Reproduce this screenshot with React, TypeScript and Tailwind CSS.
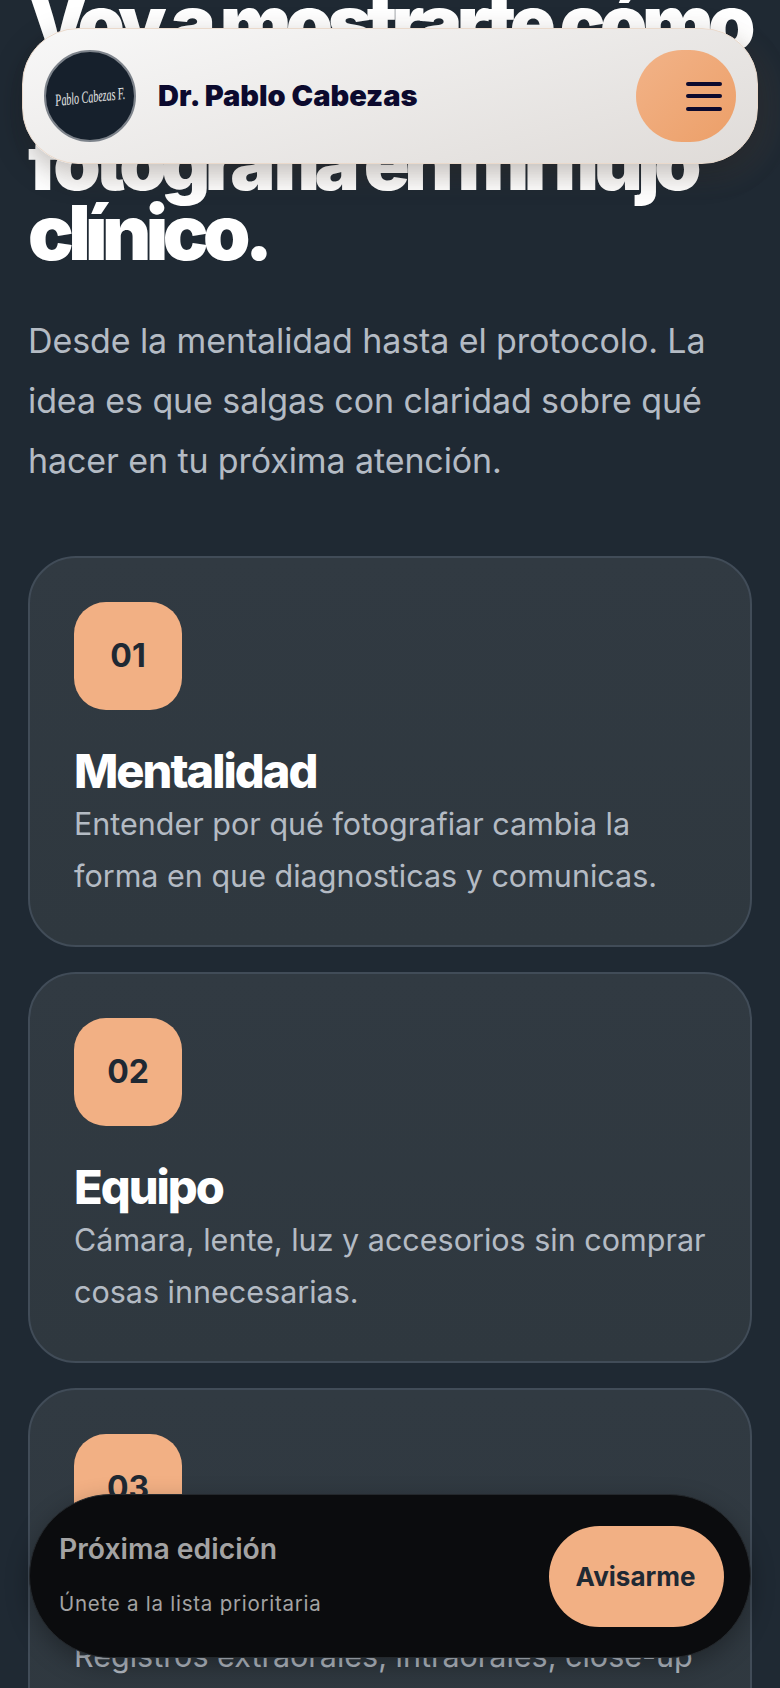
const sans = "font-['Inter','Liberation_Sans',sans-serif]"

const cards = [
  {
    n: "01",
    title: "Mentalidad",
    text: "Entender por qué fotografiar cambia la forma en que diagnosticas y comunicas.",
  },
  {
    n: "02",
    title: "Equipo",
    text: "Cámara, lente, luz y accesorios sin comprar cosas innecesarias.",
  },
  {
    n: "03",
    title: "Protocolo",
    text: "Registros extraorales, intraorales, close-up y videos para tus casos clínicos.",
  },
]

const StepCard = ({ n, title, text }: { n: string; title: string; text: string }) => {
  return (
    <div className="rounded-[48px] border-2 border-[#414c58] bg-[linear-gradient(180deg,#313a42,#2f383f)] px-[44px] pt-[44px] pb-[43px]">
      <div className="flex h-[108px] w-[108px] items-center justify-center rounded-[32px] bg-[#f2b084] text-[32px] font-bold text-[#1f2933]">
        {n}
      </div>
      <h3 className="mt-[34px] text-[47px] leading-[54px] font-extrabold tracking-[-2px] text-white">
        {title}
      </h3>
      <p className="text-[30.5px] leading-[52px] text-[#b4bbc4]">{text}</p>
    </div>
  )
}

export default function App() {
  return (
    <div className={`relative h-[1688px] w-[780px] overflow-hidden bg-[#1f2933] ${sans}`}>
      <main className="-mt-[13px] px-[28px]">
        <h1 className="text-[76px] leading-[70px] font-black tracking-[-5.6px] text-white">
          Voy a mostrarte cómo
          <br />
          integro la
          <br />
          fotografía en mi flujo
          <br />
          clínico.
        </h1>
        <p className="mt-[44px] text-[34px] leading-[60px] tracking-[-0.1px] text-[#b4bbc4]">
          Desde la mentalidad hasta el protocolo. La idea es que salgas con claridad sobre qué
          hacer en tu próxima atención.
        </p>
        <div className="mt-[65px] flex flex-col gap-[25px]">
          {cards.map((c) => (
            <StepCard key={c.n} {...c} />
          ))}
        </div>
      </main>

      <header className="absolute top-[28px] left-[22px] flex h-[136px] w-[736px] items-center justify-between rounded-[56px] border border-[#ead9cb] bg-[linear-gradient(165deg,#f8f8f8,#dfdbd8)] px-[21px] shadow-[0_10px_30px_rgba(0,0,0,0.25),12px_12px_30px_rgba(242,176,132,0.08)]">
        <div className="flex items-center gap-[22px]">
          <div className="flex h-[92px] w-[92px] items-center justify-center overflow-hidden rounded-full border-2 border-[#7d838b] bg-[#16202c]">
            <span className="-rotate-6 scale-y-[1.7] font-['Liberation_Serif',serif] text-[10px] font-light whitespace-nowrap text-white/90 italic">
              Pablo Cabezas F.
            </span>
          </div>
          <span className="text-[29px] font-black tracking-[0px] text-[#0c0a2e]">
            Dr. Pablo Cabezas
          </span>
        </div>
        <button className="flex h-[92px] w-[100px] items-center justify-end rounded-full bg-gradient-to-br from-[#f2b388] to-[#ec9f68] pr-[14px]">
          <span className="flex w-[36px] flex-col gap-[8.5px]">
            <span className="h-[4px] rounded-full bg-[#0c0a2e]" />
            <span className="h-[4px] rounded-full bg-[#0c0a2e]" />
            <span className="h-[4px] rounded-full bg-[#0c0a2e]" />
          </span>
        </button>
      </header>

      <aside className="absolute top-[1494px] left-[29px] flex h-[164px] w-[722px] items-center justify-between rounded-[82px] border border-[#24282c] bg-[#0b0c0e] pr-[26px] pl-[29px] shadow-[0_8px_24px_rgba(0,0,0,0.3)]">
        <div className="-mt-[4px]">
          <p className="text-[28.3px] leading-[36px] font-semibold text-[#a3a3a3]">Próxima edición</p>
          <p className="mt-[23px] text-[20.5px] leading-[28px] tracking-[0.75px] text-[#a3a3a3]">
            Únete a la lista prioritaria
          </p>
        </div>
        <button className="flex h-[101px] w-[175px] items-center justify-center rounded-full bg-[#f2b084] pr-[2px] text-[26px] font-bold text-[#1f2933]">
          Avisarme
        </button>
      </aside>
    </div>
  )
}
